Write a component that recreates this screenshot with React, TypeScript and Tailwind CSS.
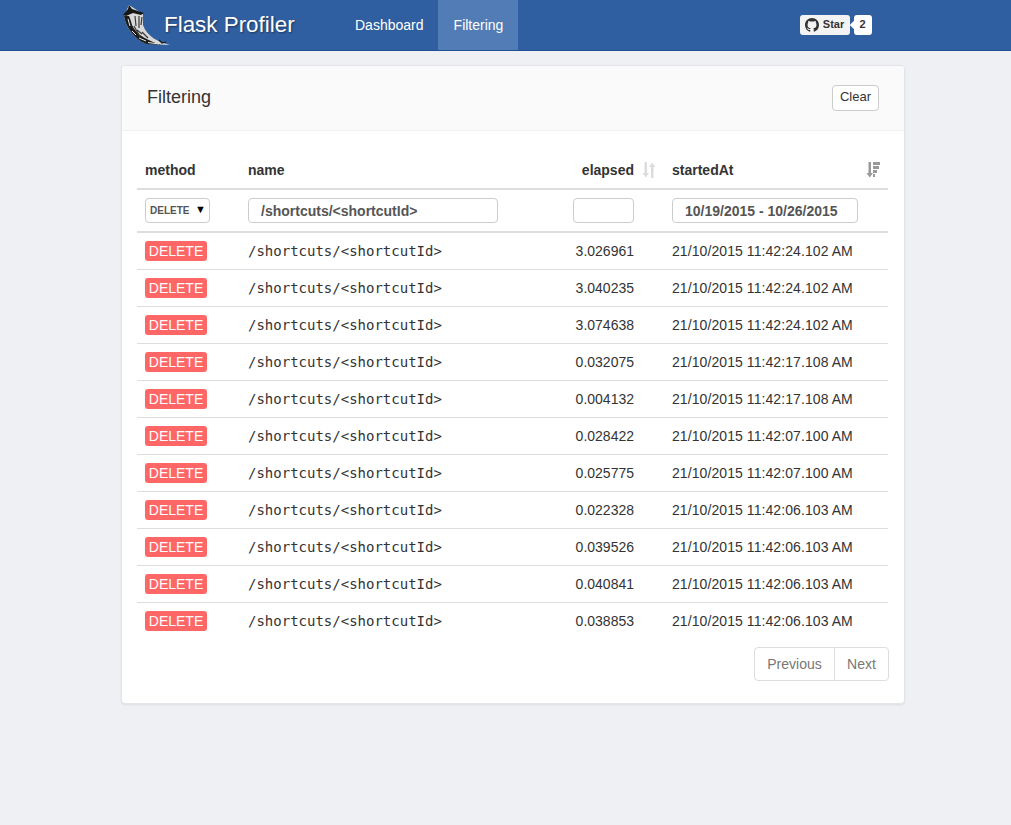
import React from "react";

const rows = [
  { elapsed: "3.026961", startedAt: "21/10/2015 11:42:24.102 AM" },
  { elapsed: "3.040235", startedAt: "21/10/2015 11:42:24.102 AM" },
  { elapsed: "3.074638", startedAt: "21/10/2015 11:42:24.102 AM" },
  { elapsed: "0.032075", startedAt: "21/10/2015 11:42:17.108 AM" },
  { elapsed: "0.004132", startedAt: "21/10/2015 11:42:17.108 AM" },
  { elapsed: "0.028422", startedAt: "21/10/2015 11:42:07.100 AM" },
  { elapsed: "0.025775", startedAt: "21/10/2015 11:42:07.100 AM" },
  { elapsed: "0.022328", startedAt: "21/10/2015 11:42:06.103 AM" },
  { elapsed: "0.039526", startedAt: "21/10/2015 11:42:06.103 AM" },
  { elapsed: "0.040841", startedAt: "21/10/2015 11:42:06.103 AM" },
  { elapsed: "0.038853", startedAt: "21/10/2015 11:42:06.103 AM" },
];

const FlaskHorn = () => (
  <svg width="50" height="48" viewBox="0 0 50 48" className="shrink-0">
    <path d="M3 15 C5 28 15 40 27 43 L49 44 C38 41 26 36 22 24 L22 13 L8 4 Z" fill="#d8d8d8" />
    <path d="M2 14 L7 8 L8 4 L11 8 L23 12 L20 14 L12 12 L5 15 Z" fill="#161616" />
    <path d="M3 15 C5 27 14 39 26 43 L40 44 C28 40 15 34 11 24 C10 20 9 17 8 15 Z" fill="#1c1c1c" />
    <path d="M14 15 L15 25 M18 15 L18 27 M21 16 L20 24 M16 29 L21 33 M21 31 L27 37 M13 25 L19 36" stroke="#3a3a3a" strokeWidth="1.2" fill="none" />
    <path d="M7 18 L9 25 M11 30 L15 34 M18 37 L25 40 M27 41.5 L38 43" stroke="#e8e8e8" strokeWidth="1" fill="none" />
    <path d="M38 39 L41 42 L45 41" stroke="#161616" strokeWidth="1.2" fill="none" />
  </svg>
);

const GithubMark = () => (
  <svg width="14" height="14" viewBox="0 0 16 16" fill="#333">
    <path d="M8 0C3.58 0 0 3.58 0 8c0 3.54 2.29 6.53 5.47 7.59.4.07.55-.17.55-.38 0-.19-.01-.82-.01-1.49-2.01.37-2.53-.49-2.69-.94-.09-.23-.48-.94-.82-1.13-.28-.15-.68-.52-.01-.53.63-.01 1.08.58 1.23.82.72 1.21 1.87.87 2.33.66.07-.52.28-.87.51-1.07-1.78-.2-3.64-.89-3.64-3.95 0-.87.31-1.59.82-2.15-.08-.2-.36-1.02.08-2.12 0 0 .67-.21 2.2.82.64-.18 1.32-.27 2-.27s1.36.09 2 .27c1.53-1.04 2.2-.82 2.2-.82.44 1.1.16 1.92.08 2.12.51.56.82 1.27.82 2.15 0 3.07-1.87 3.75-3.65 3.95.29.25.54.73.54 1.48 0 1.07-.01 1.93-.01 2.2 0 .21.15.46.55.38A8.01 8.01 0 0 0 16 8c0-4.42-3.58-8-8-8z" />
  </svg>
);

const SortBoth = () => (
  <svg width="14" height="16" viewBox="0 0 14 16" fill="#dcdcdc">
    <path d="M2.5 0h2.5v11h2l-3.2 4.5L0.5 11h2z" />
    <path d="M9 16V5H7l3.2-4.5L13.5 5h-2v11z" />
  </svg>
);

const SortDesc = () => (
  <svg width="14" height="16" viewBox="0 0 14 16" fill="#999">
    <path d="M2.5 0h2.5v11h2l-3.2 4.5L0.5 11h2z" />
    <path d="M7 0h7v3H7zM7 4h6v3H7zM7 8h4v3H7zM7 12h2v3H7z" />
  </svg>
);

const inputClass =
  "h-[25px] rounded-[4px] border border-[#ccc] bg-white text-sm font-bold text-[#555]";

export default function App() {
  return (
    <div className="min-h-[825px] bg-[#eef0f4] font-['Liberation_Sans',Arial,sans-serif] text-sm text-[#333]">
      <nav className="h-[51px] border-b border-[#1f4f94] bg-[#305fa1]">
        <div className="ml-[121px] flex h-[50px] w-[770px] items-center">
          <div className="flex h-full w-[219px] items-center">
            <FlaskHorn />
            <span className="ml-[-7px] text-[22.4px] text-white [text-shadow:1px_1px_2px_rgba(0,0,0,0.45)]">
              Flask Profiler
            </span>
          </div>
          <a className="flex h-full items-center pl-[15px] pr-[14px] text-white">Dashboard</a>
          <a className="flex h-full w-[80px] items-center justify-center bg-[#527cb5] pl-[2px] text-white">Filtering</a>
          <div className="ml-[282px] flex items-center">
            <span className="flex h-[20px] w-[50px] items-center justify-center gap-1 rounded-[3px] bg-[#f3f3f3] text-[11px] font-bold text-[#333]">
              <GithubMark />
              Star
            </span>
            <span className="relative ml-[4px] flex h-[20px] w-[18px] items-center justify-center rounded-[3px] bg-white text-[11px] font-bold text-[#333]">
              <span className="absolute left-[-3px] top-[7px] h-[6px] w-[6px] rotate-45 bg-white" />
              2
            </span>
          </div>
        </div>
      </nav>

      <main className="ml-[121px] mt-[14px] w-[784px] overflow-hidden rounded-[4px] border border-[#e3e5ea] bg-white shadow-[0_1px_2px_rgba(0,0,0,0.08)]">
        <header className="flex h-[65px] items-center justify-between border-b border-[#f1f1f1] bg-[#fafafa] px-[25px] pb-[2px]">
          <h3 className="text-lg text-[#333]">Filtering</h3>
          <button className="mt-[1px] h-[26px] w-[47px] rounded-[4px] border border-[#ccc] bg-white text-[13px] text-[#333]">
            Clear
          </button>
        </header>

        <div className="px-[15px] pt-[20px]">
          <table className="w-[751px] table-fixed border-collapse">
            <colgroup>
              <col className="w-[103px]" />
              <col className="w-[325px]" />
              <col className="w-[99px]" />
              <col className="w-[224px]" />
            </colgroup>
            <thead>
              <tr className="h-[38px] border-b-2 border-[#ddd] font-bold">
                <th className="pl-2 text-left font-bold">method</th>
                <th className="pl-2 text-left font-bold">name</th>
                <th className="pr-[8px] text-right font-bold">
                  <span className="inline-flex items-center gap-[8px]">
                    elapsed
                    <SortBoth />
                  </span>
                </th>
                <th className="pl-2 pr-[8px] text-left font-bold">
                  <span className="flex items-center justify-between">
                    startedAt
                    <SortDesc />
                  </span>
                </th>
              </tr>
              <tr className="h-[43px] border-b-2 border-[#ddd]">
                <td className="pl-2">
                  <div className="flex h-[25px] w-[65px] items-center justify-between rounded-[4px] border border-[#ccc] bg-white pl-[4px] pr-[3px] pt-[1px] text-[10px] font-bold text-[#555]">
                    DELETE
                    <span className="pb-[2px] text-[11px] text-black">▼</span>
                  </div>
                </td>
                <td className="pl-2">
                  <div className={`${inputClass} flex w-[250px] items-center pl-[12px]`}>
                    /shortcuts/&lt;shortcutId&gt;
                  </div>
                </td>
                <td className="pl-2">
                  <div className={`${inputClass} w-[61px]`} />
                </td>
                <td className="pl-2">
                  <div className={`${inputClass} flex w-[186px] items-center pl-[12px]`}>
                    10/19/2015 - 10/26/2015
                  </div>
                </td>
              </tr>
            </thead>
            <tbody>
              {rows.map((row, index) => (
                <tr key={index} className="h-[37px] border-t border-[#ddd] first:border-t-0">
                  <td className="pl-2">
                    <span className="inline-flex h-[20px] w-[62px] items-center justify-center rounded-[3px] bg-[#ff6666] text-sm text-white">
                      DELETE
                    </span>
                  </td>
                  <td className="pl-2 font-['DejaVu_Sans_Mono',monospace] text-sm text-[#333]">
                    /shortcuts/&lt;shortcutId&gt;
                  </td>
                  <td className="pr-[30px] text-right">{row.elapsed}</td>
                  <td className="pl-2 tracking-[0.08px]">{row.startedAt}</td>
                </tr>
              ))}
            </tbody>
          </table>

          <div className="mb-[22px] mt-[8px] flex justify-end">
            <div className="flex h-[34px] rounded-[4px] border border-[#ddd] text-sm text-[#777]">
              <span className="flex w-[80px] items-center justify-center border-r border-[#ddd]">Previous</span>
              <span className="flex w-[53px] items-center justify-center">Next</span>
            </div>
          </div>
        </div>
      </main>
    </div>
  );
}
